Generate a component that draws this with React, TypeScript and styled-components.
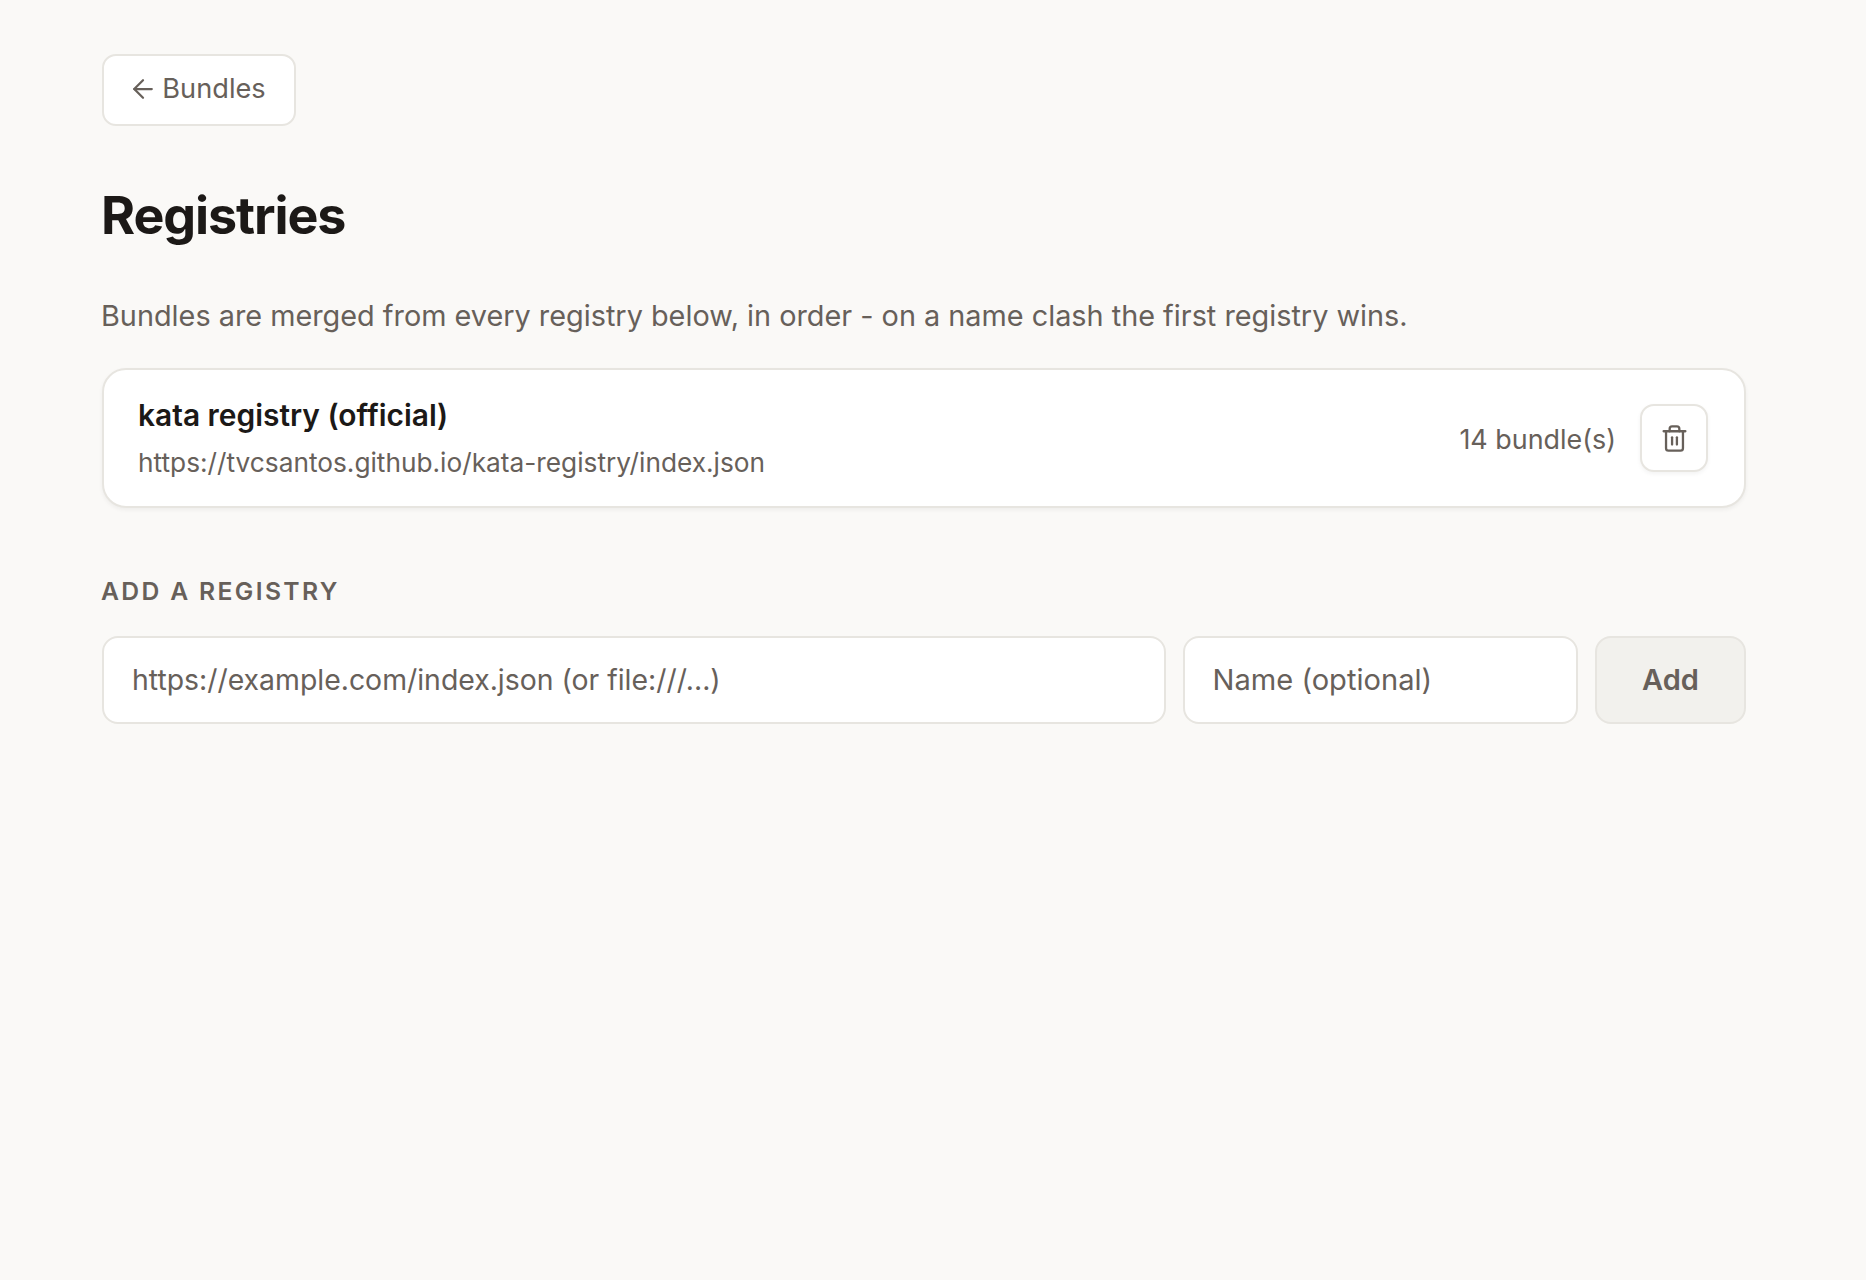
import React from "react";
import styled, { createGlobalStyle } from "styled-components";
import { ArrowLeft, Trash2 } from "lucide-react";

const Global = createGlobalStyle`
  html, body { margin: 0; padding: 0; background: #faf9f7; }
  body { font-family: Inter, "Liberation Sans", sans-serif; color: #1c1917; }
  * { box-sizing: border-box; }
`;

const Page = styled.main`
  width: 1866px;
  min-height: 1280px;
  padding: 54px 120px 0 102px;
  background: #faf9f7;
`;

const BackButton = styled.button`
  display: inline-flex;
  align-items: center;
  justify-content: center;
  gap: 4px;
  height: 72px;
  width: 194px;
  padding: 0 4px 3px 0;
  background: #fff;
  border: 2px solid #e7e5e0;
  border-radius: 14px;
  color: #67605a;
  font: 400 27.2px Inter, sans-serif;
`;

const Title = styled.h1`
  margin: 58px 0 0 -1px;
  font-size: 52px;
  line-height: 64px;
  font-weight: 700;
  letter-spacing: -1.1px;
  color: #1c1917;
`;

const Description = styled.p`
  margin: 46px 0 0 -1px;
  font-size: 28.83px;
  line-height: 44px;
  color: #67605a;
`;

const Card = styled.section`
  display: flex;
  align-items: center;
  justify-content: space-between;
  height: 140px;
  margin-top: 30px;
  padding: 0 36px 0 34px;
  background: #fff;
  border: 2px solid #e7e5e0;
  border-radius: 24px;
  box-shadow: 0 2px 4px rgba(28, 25, 23, 0.05);
`;

const CardInfo = styled.div`
  display: flex;
  flex-direction: column;
  gap: 8px;
  padding-top: 1px;
`;

const CardName = styled.div`
  font-size: 29.9px;
  line-height: 40px;
  font-weight: 600;
  color: #1c1917;
`;

const CardUrl = styled.div`
  font-size: 26.25px;
  line-height: 40px;
  color: #67605a;
`;

const CardActions = styled.div`
  display: flex;
  align-items: center;
  gap: 24px;
`;

const BundleCount = styled.span`
  padding-top: 1px;
  font-size: 26.9px;
  color: #67605a;
`;

const IconButton = styled.button`
  display: flex;
  align-items: center;
  justify-content: center;
  width: 68px;
  height: 68px;
  padding: 0;
  background: #fff;
  border: 2px solid #e7e5e0;
  border-radius: 14px;
  color: #67605a;
  box-shadow: 0 2px 4px rgba(28, 25, 23, 0.05);
`;

const SectionLabel = styled.h2`
  margin: 67px 0 0 -1px;
  font-size: 24.7px;
  line-height: 32px;
  font-weight: 600;
  letter-spacing: 2.35px;
  text-transform: uppercase;
  color: #67605a;
`;

const AddRow = styled.form`
  display: flex;
  gap: 17px;
  margin-top: 29px;
`;

const Field = styled.input<{ $width: number; $size: number }>`
  flex: 0 0 ${(p) => p.$width}px;
  min-width: 0;
  height: 88px;
  padding: 0 28px 2px;
  background: #fff;
  border: 2px solid #e7e5e0;
  border-radius: 16px;
  font: 400 ${(p) => p.$size}px Inter, sans-serif;
  color: #1c1917;
  outline: none;
  &::placeholder { color: #67605a; opacity: 1; }
`;

const AddButton = styled.button`
  flex: 0 0 151px;
  height: 88px;
  padding: 0 0 2px;
  background: #f2f1ed;
  border: 2px solid #e7e5e0;
  border-radius: 16px;
  color: #67605a;
  font: 600 29px Inter, sans-serif;
`;

export default function App() {
  return (
    <Page>
      <Global />
      <BackButton type="button">
        <ArrowLeft size={30} strokeWidth={1.8} />
        Bundles
      </BackButton>
      <Title>Registries</Title>
      <Description>
        Bundles are merged from every registry below, in order - on a name clash the first registry wins.
      </Description>
      <Card>
        <CardInfo>
          <CardName>kata registry (official)</CardName>
          <CardUrl>https://tvcsantos.github.io/kata-registry/index.json</CardUrl>
        </CardInfo>
        <CardActions>
          <BundleCount>14 bundle(s)</BundleCount>
          <IconButton type="button" aria-label="Remove">
            <Trash2 size={29} strokeWidth={1.9} />
          </IconButton>
        </CardActions>
      </Card>
      <SectionLabel>Add a registry</SectionLabel>
      <AddRow>
        <Field $width={1063.5} $size={28.4} placeholder="https://example.com/index.json (or file:///...)" />
        <Field $width={395.5} $size={29.1} placeholder="Name (optional)" />
        <AddButton type="button">Add</AddButton>
      </AddRow>
    </Page>
  );
}
